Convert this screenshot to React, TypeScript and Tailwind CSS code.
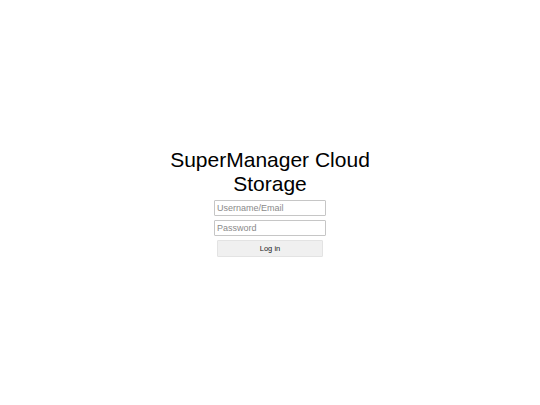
import { useState } from 'react'

export default function App() {
  const [user, setUser] = useState('')
  const [password, setPassword] = useState('')

  return (
    <div className="flex min-h-screen w-full items-center justify-center bg-white font-['Liberation_Sans',Arial,sans-serif] text-black">
      <form
        className="flex w-[230px] flex-col items-center"
        onSubmit={(e) => e.preventDefault()}
      >
        {/* Title */}
        <h1 className="text-center text-[21px] font-normal leading-[24px]">
          SuperManager Cloud Storage
        </h1>

        {/* Fields */}
        <input
          type="text"
          value={user}
          onChange={(e) => setUser(e.target.value)}
          placeholder="Username/Email"
          className="mt-[4px] h-[16px] w-[112px] rounded-[1px] border border-[#c6c6c6] bg-white px-[2px] text-[9px] leading-none outline-none placeholder:text-[#8a8a8a]"
        />
        <input
          type="password"
          value={password}
          onChange={(e) => setPassword(e.target.value)}
          placeholder="Password"
          className="mt-[4px] h-[16px] w-[112px] rounded-[1px] border border-[#c6c6c6] bg-white px-[2px] text-[9px] leading-none outline-none placeholder:text-[#8a8a8a]"
        />
        <button
          type="submit"
          className="mt-[4px] h-[17px] w-[106px] rounded-[1px] border border-[#e3e3e3] bg-[#f0f0f0] text-[7.5px] leading-none text-[#222]"
        >
          Log in
        </button>
      </form>
    </div>
  )
}
